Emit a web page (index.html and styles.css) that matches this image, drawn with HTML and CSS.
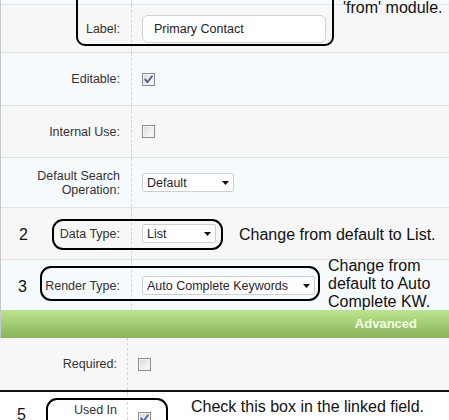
FILE: index.html
```html
<!DOCTYPE html>
<html lang="en">
<head>
<meta charset="utf-8">
<title>Field settings</title>
<link rel="stylesheet" href="styles.css">
</head>
<body>
<div class="page">
  <section class="upper">
    <div class="row row--lead">
      <div class="label"></div>
      <div class="value"></div>
    </div>

    <div class="row row--gray row--h47 row--marked">
      <div class="label"><span class="label-text">Label:</span></div>
      <div class="value"><div class="input">Primary Contact</div></div>
      <div class="mark mark--label"></div>
      <div class="note note--top">'from' module.</div>
    </div>

    <div class="row row--blue row--h52">
      <div class="label"><span class="label-text">Editable:</span></div>
      <div class="value">
        <span class="cb cb--on"><svg viewBox="0 0 11 11" width="11" height="11"><path d="M2.2 5.4 L4.4 8.2 L9 2.2" fill="none" stroke="#4659a0" stroke-width="1.8" stroke-linecap="round" stroke-linejoin="round"/></svg></span>
      </div>
    </div>

    <div class="row row--gray row--h51">
      <div class="label"><span class="label-text">Internal Use:</span></div>
      <div class="value"><span class="cb"></span></div>
    </div>

    <div class="row row--blue row--h49">
      <div class="label"><span class="label-text label-text--wrap">Default Search Operation:</span></div>
      <div class="value">
        <div class="select select--default"><span>Default</span><svg class="caret" viewBox="0 0 7 4" width="7" height="4"><path d="M0 0 H7 L3.5 4 Z" fill="#111"/></svg></div>
      </div>
    </div>

    <div class="row row--gray row--h51 row--marked">
      <div class="label"><span class="num num--2">2</span><span class="label-text">Data Type:</span></div>
      <div class="value">
        <div class="select select--list"><span>List</span><svg class="caret" viewBox="0 0 7 4" width="7" height="4"><path d="M0 0 H7 L3.5 4 Z" fill="#111"/></svg></div>
        <div class="note note--list">Change from default to List.</div>
      </div>
      <div class="mark mark--data"></div>
    </div>

    <div class="row row--blue row--h50 row--marked row--last">
      <div class="label"><span class="num num--3">3</span><span class="label-text">Render Type:</span></div>
      <div class="value">
        <div class="select select--render"><span>Auto Complete Keywords</span><svg class="caret" viewBox="0 0 7 4" width="7" height="4"><path d="M0 0 H7 L3.5 4 Z" fill="#111"/></svg></div>
        <div class="note note--render">Change from default to Auto Complete KW.</div>
      </div>
      <div class="mark mark--render"></div>
    </div>

    <div class="section-head">Advanced</div>
  </section>

  <section class="lower">
    <div class="row row--gray row--h52 row--narrow">
      <div class="label"><span class="label-text">Required:</span></div>
      <div class="value"><span class="cb"></span></div>
    </div>
  </section>

  <div class="cut"></div>

  <section class="extra">
    <div class="row row--white row--narrow row--top row--marked">
      <div class="label"><span class="num num--5">5</span><span class="label-text label-text--used">Used In</span></div>
      <div class="value">
        <span class="cb cb--on cb--used"><svg viewBox="0 0 11 11" width="11" height="11"><path d="M2.2 5.4 L4.4 8.2 L9 2.2" fill="none" stroke="#4659a0" stroke-width="1.8" stroke-linecap="round" stroke-linejoin="round"/></svg></span>
        <div class="note note--used">Check this box in the linked field.</div>
      </div>
      <div class="mark mark--used"></div>
    </div>
  </section>
</div>
</body>
</html>
```

FILE: styles.css
```css
html, body {
  margin: 0;
  padding: 0;
}

body {
  width: 449px;
  height: 420px;
  overflow: hidden;
  background: #fff;
  font-family: "Liberation Sans", Arial, sans-serif;
}

.page {
  width: 449px;
}

.upper {
  border-left: 1px solid #c8c8c8;
}

/* ---------- rows ---------- */
.row {
  display: grid;
  grid-template-columns: 130px 1fr;
  border-bottom: 1px solid #e2e2e2;
  box-sizing: content-box;
}

.row--marked {
  position: relative;
}

.row--lead { height: 4px; background: #f6fbfe; }
.row--h47 { height: 47px; }
.row--h49 { height: 49px; }
.row--h50 { height: 50px; }
.row--h51 { height: 51px; }
.row--h52 { height: 52px; }

.row--gray { background: #f7f7f7; }
.row--blue { background: #f5fafd; }
.row--white { background: #fff; border-bottom: none; height: 28px; }

.row--last { border-bottom: none; }

.row--narrow {
  grid-template-columns: 127px 1fr;
  border-bottom: none;
}

.label {
  display: flex;
  align-items: center;
  justify-content: flex-end;
  padding-right: 11px;
  font-size: 12.5px;
  line-height: 14px;
  color: #333;
}

.row--narrow .label {
  padding-right: 10px;
}

.label-text {
  text-align: right;
}

.label-text--wrap {
  width: 100px;
}

.value {
  display: flex;
  align-items: center;
  padding-left: 10px;
  border-left: 1px dashed #d6d6d6;
}

/* ---------- numbered rows ---------- */
.num {
  margin-right: auto;
  font-size: 16px;
  line-height: 18px;
  color: #111;
}

.num--2 { padding-left: 18px; margin-top: 3px; }
.num--3 { padding-left: 17px; margin-top: 2px; }
.num--5 { padding-left: 17px; }

/* bottom (cut-off) row: items hang from the top */
.row--top .label,
.row--top .value {
  align-items: flex-start;
}

.num--5 { margin-top: 14px; }
.label-text--used { margin-top: 11px; }
.cb--used { margin-top: 20px; }

/* ---------- controls ---------- */
.input {
  box-sizing: border-box;
  width: 184px;
  height: 28px;
  padding-left: 11px;
  border: 1px solid #d2d2d2;
  border-radius: 6px;
  background: #fff;
  font-size: 12.5px;
  line-height: 26px;
  color: #222;
}

.cb {
  display: inline-block;
  width: 11px;
  height: 11px;
  border: 1px solid #8e8e8e;
  background: linear-gradient(135deg, #d6d6d6 0%, #f0f0f0 60%, #fbfbfb 100%);
  box-shadow: inset 0 0 0 1px #f4f4f4;
  position: relative;
}

.cb svg {
  display: block;
}

.select {
  box-sizing: border-box;
  display: flex;
  align-items: center;
  justify-content: space-between;
  height: 19px;
  padding: 0 4px 0 4px;
  border: 1px solid #cfcfcf;
  border-radius: 2px;
  background: #fff;
  font-size: 12.5px;
  color: #1f1f2e;
}

.select--default { width: 92px; }
.select--list { width: 74px; }
.select--render { width: 173px; }

.caret {
  display: block;
  flex: none;
}

/* ---------- annotations ---------- */
.note {
  font-size: 16px;
  line-height: 18px;
  color: #111;
}

.note--list {
  margin-left: 23px;
  margin-top: 2px;
  white-space: nowrap;
}

.note--render {
  margin-left: 13px;
  width: 115px;
  margin-top: -3px;
}

.note--used {
  margin-left: 40px;
  margin-top: 6px;
  white-space: nowrap;
}

.note--top {
  position: absolute;
  left: 342px;
  top: -6px;
  white-space: nowrap;
}

.mark {
  position: absolute;
  border: 2px solid #000;
  border-radius: 10px;
  box-sizing: border-box;
  pointer-events: none;
}

.mark--label  { left: 75px; top: -20px; width: 258px; height: 61px; border-radius: 9px; }
.mark--data   { left: 51px; top: 11px;  width: 171px; height: 31px; border-radius: 11px; }
.mark--render { left: 39px; top: 6px;   width: 280px; height: 35px; border-radius: 11px; }
.mark--used   { left: 46px; top: 6px;   width: 122px; height: 50px; border-radius: 11px; }

/* ---------- section header ---------- */
.section-head {
  height: 28px;
  padding-right: 32px;
  background: linear-gradient(#bbe491, #88b358);
  color: #f4ffe6;
  font-size: 13px;
  font-weight: bold;
  line-height: 28px;
  text-align: right;
}

.cut {
  height: 2px;
  background: #111;
}
```
